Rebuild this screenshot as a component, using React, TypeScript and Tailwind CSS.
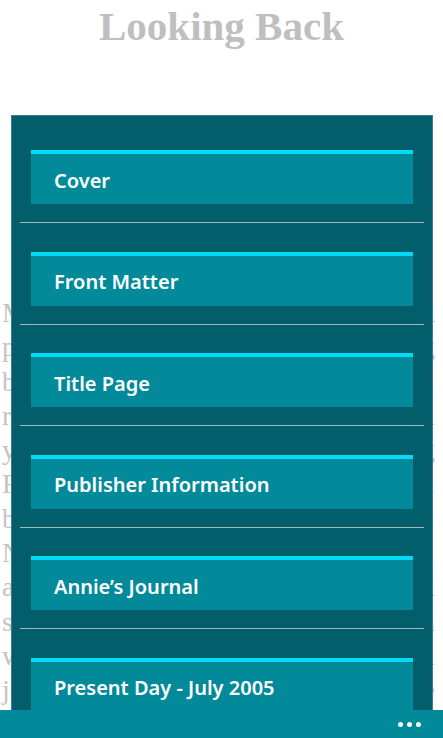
export default function App() {
  const chapters = [
    'Cover',
    'Front Matter',
    'Title Page',
    'Publisher Information',
    'Annie\u2019s Journal',
    'Present Day - July 2005',
  ];

  const lines = [
    'My grandmother kept old letters in a',
    'parlour closet, tied up with string',
    'behind the coats where no one went.',
    'reading them was her quiet ritual',
    'yesterday, she said, is for the living',
    'For remembering, not for mourning,',
    'but I never understood it until now.',
    'Now the house is quiet and empty,',
    'and I open the box and read them',
    'slowly, one by one, as though each',
    'were written for me alone. They tell',
    'journeys across the sea and a life',
  ];

  return (
    <div className="relative h-[738px] w-[443px] overflow-hidden bg-white">
      {/* page content behind the menu */}
      <h1 className="pt-[2px] text-center text-[41px] font-bold leading-[48px] text-[#bfbfbf]" style={{ fontFamily: '"Liberation Serif", serif' }}>
        Looking Back
      </h1>
      <div className="mt-[246px] pl-[2px] pr-[8px] text-[28px] leading-[34.3px] text-[#c4c4c4]" style={{ fontFamily: '"Liberation Serif", serif' }}>
        {lines.map((l) => (
          <div key={l} className="text-justify [text-align-last:justify]">
            {l}
          </div>
        ))}
      </div>

      {/* table of contents flyout */}
      <div className="absolute left-[11px] top-[115px] bottom-0 w-[422px] border border-[#3d7f89] bg-[#015e6a] pt-[34px]">
        {chapters.map((c, i) => (
          <div key={c} className={i === 0 ? '' : 'mt-[28.6px]'}>
            <div className="mx-[19px] flex h-[54px] items-center border-t-4 border-[#00dcf6] bg-[#028a9b] pl-[23px] pt-[3px]">
              <span className="text-[20px] font-semibold text-white" style={{ fontFamily: '"Noto Sans", sans-serif' }}>
                {c}
              </span>
            </div>
            <div className="mx-[8px] mt-[18px] h-px bg-[#a3b9bc]" />
          </div>
        ))}
      </div>

      {/* app bar */}
      <div className="absolute bottom-0 left-0 right-0 flex h-[28px] items-center justify-end gap-[4px] bg-[#028a9b] pr-[22px]">
        <span className="h-[5px] w-[5px] rounded-full bg-white" />
        <span className="h-[5px] w-[5px] rounded-full bg-white" />
        <span className="h-[5px] w-[5px] rounded-full bg-white" />
      </div>
    </div>
  );
}
